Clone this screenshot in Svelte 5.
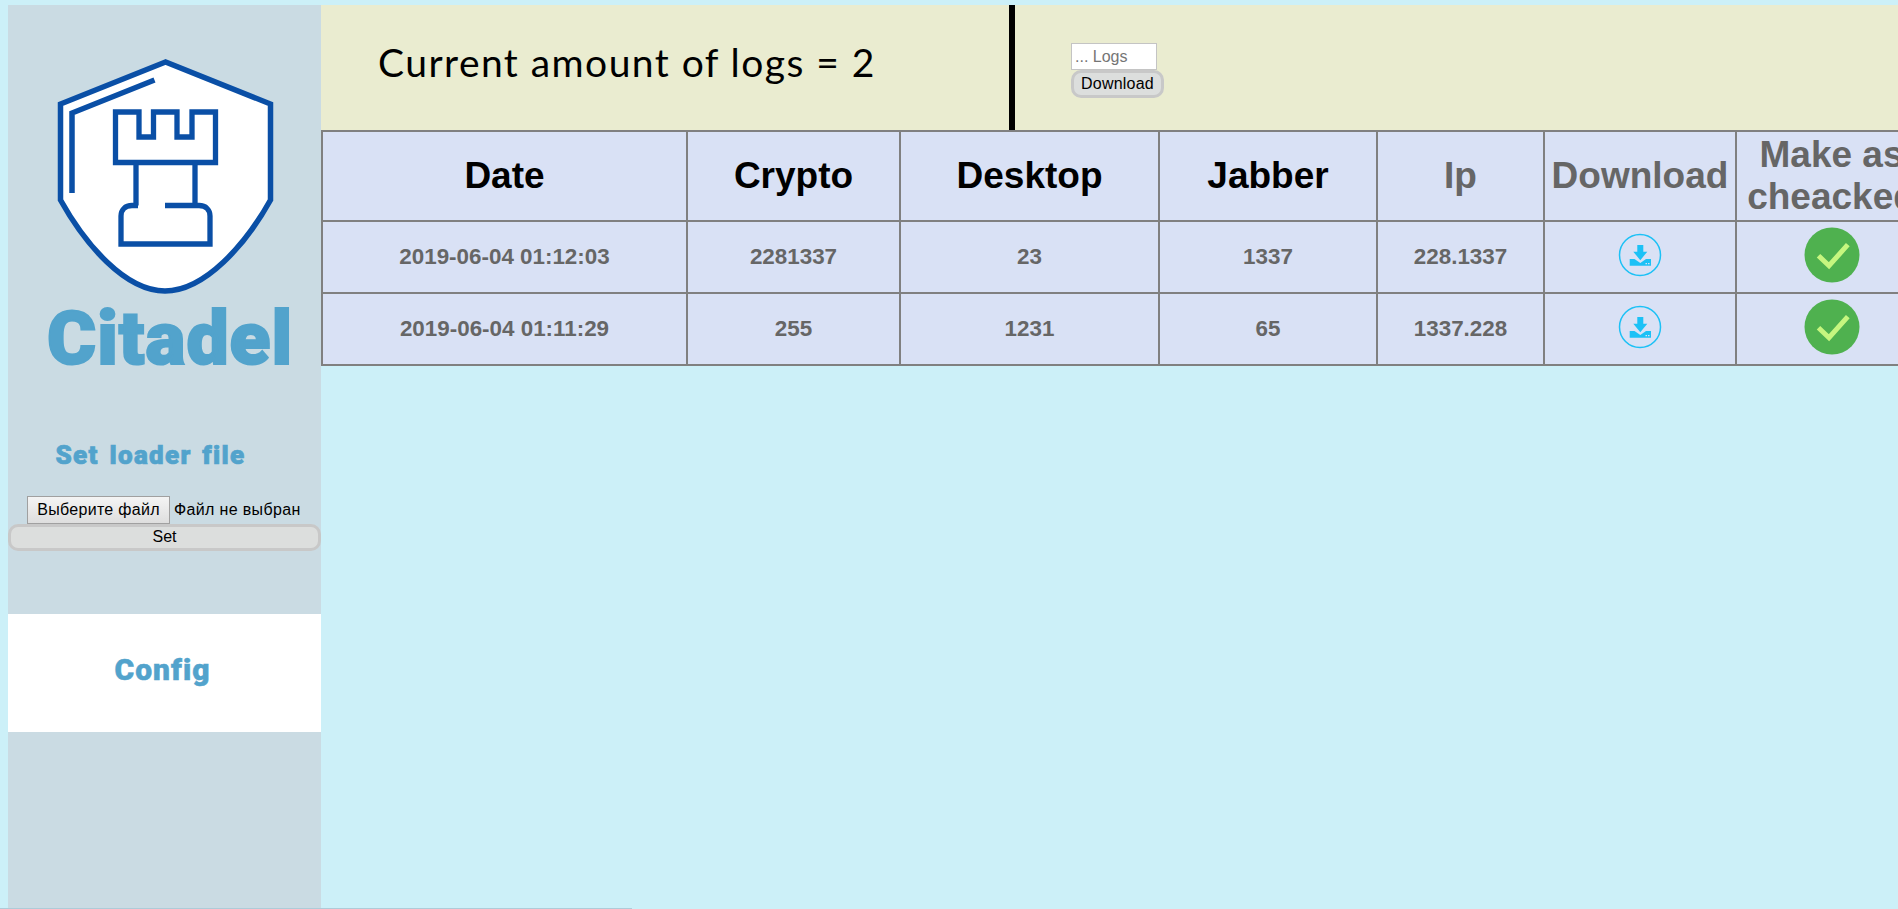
<script lang="ts">
	const logs = [
		{ date: '2019-06-04 01:12:03', crypto: '2281337', desktop: '23', jabber: '1337', ip: '228.1337' },
		{ date: '2019-06-04 01:11:29', crypto: '255', desktop: '1231', jabber: '65', ip: '1337.228' }
	];
</script>

<div class="page">
	<aside class="sidebar">
		<svg class="shield" width="313" height="245" viewBox="8 55 313 245" fill="none" stroke="#0a4fa6">
			<path d="M165.500 62 L60.500 104 V200 C85 244 125 291 165 291 C205 291 246 244 270.500 200 V104 Z" fill="#fff" stroke-width="5.500" />
			<path d="M154.500 80 L72 113 V193" stroke-width="5.500" />
			<path d="M115.500 112 H139 V137 H153.500 V112 H177 V137 H192 V112 H215.500 V162.500 H115.500 Z" stroke-width="5.300" />
			<path d="M136 162 V205.500 M195 162 V205.500" stroke-width="5.300" />
			<path d="M138 205.500 H132 C125 205.500 121 210 121 216 V244 H210 V216 C210 210 206 205.500 199 205.500 H165" stroke-width="5.300" />
		</svg>
		<div class="brand">Citadel</div>

		<h3 class="loader-title">Set loader file</h3>
		<div class="file-row">
			<button class="file-btn">Выберите файл</button>
			<span class="file-name">Файл не выбран</span>
		</div>
		<button class="pill wide">Set</button>

		<div class="config">Config</div>
	</aside>

	<main class="content">
		<header class="topbar">
			<div class="count">Current amount of logs = 2</div>
			<div class="download-form">
				<input class="logs-input" placeholder="... Logs" />
				<button class="pill">Download</button>
			</div>
		</header>

		<table>
			<colgroup>
				<col style="width: 365px" />
				<col style="width: 213px" />
				<col style="width: 259px" />
				<col style="width: 218px" />
				<col style="width: 167px" />
				<col style="width: 192px" />
				<col style="width: 191px" />
			</colgroup>
			<thead>
				<tr>
					<th>Date</th>
					<th>Crypto</th>
					<th>Desktop</th>
					<th>Jabber</th>
					<th class="muted">Ip</th>
					<th class="muted">Download</th>
					<th class="muted">Make as cheacked</th>
				</tr>
			</thead>
			<tbody>
				{#each logs as log}
					<tr>
						<td>{log.date}</td>
						<td>{log.crypto}</td>
						<td>{log.desktop}</td>
						<td>{log.jabber}</td>
						<td>{log.ip}</td>
						<td class="icon-cell">
							<svg class="icon" width="44" height="44" viewBox="0 0 44 44">
								<circle cx="22" cy="22" r="20.500" fill="none" stroke="#1cc1f6" stroke-width="1.500" />
								<path d="M19.300 12 H25.300 V18.700 H29.300 L22.300 27.200 L15.300 18.700 H19.300 Z" fill="#1cc1f6" />
								<path d="M11.700 26 H16.500 L22.300 30 L28 26 H33 V32.700 H11.700 Z" fill="#1cc1f6" />
								<path d="M27.500 30 H29 V31.200 H27.500 Z M30 30 H31.500 V31.200 H30 Z" fill="#d9e1f5" />
							</svg>
						</td>
						<td class="icon-cell">
							<svg class="icon" width="56" height="56" viewBox="0 0 56 56">
								<circle cx="28" cy="28" r="27.500" fill="#4fb14f" />
								<path d="M14.500 28.700 L25 38.700 L43.800 17.700" fill="none" stroke="#c6f67f" stroke-width="5" />
							</svg>
						</td>
					</tr>
				{/each}
			</tbody>
		</table>
	</main>

	<div class="scroll-thumb"></div>
</div>

<style>
	:global(body) {
		margin: 0;
		background: #ccf0f8;
	}

	.page {
		display: flex;
		height: 100vh;
		padding: 5px 0 0 8px;
		box-sizing: border-box;
		overflow: hidden;
		font-family: "Liberation Sans", Arial, sans-serif;
		font-size: 16px;
		color: #000;
	}

	.sidebar {
		flex: 0 0 313px;
		display: flex;
		flex-direction: column;
		align-items: center;
		background: #cadbe3;
	}

	.shield {
		display: block;
		margin-top: 50px;
		flex: none;
	}

	.brand,
	.loader-title,
	.config {
		font-family: Roboto, "Liberation Sans", sans-serif;
		font-weight: 900;
		color: #52a3cc;
		-webkit-text-stroke-color: #52a3cc;
	}

	.brand {
		margin-top: 2px;
		padding-left: 11px;
		font-size: 75px;
		line-height: 72px;
		letter-spacing: 1px;
		-webkit-text-stroke-width: 2px;
	}

	.loader-title {
		margin: 67px 0 0;
		padding-right: 28px;
		font-size: 26px;
		line-height: 28px;
		letter-spacing: 1.300px;
		word-spacing: 3px;
		-webkit-text-stroke-width: 0.700px;
	}

	.file-row {
		align-self: flex-start;
		display: flex;
		align-items: center;
		gap: 4px;
		margin: 27px 0 0 19px;
		letter-spacing: 0.350px;
	}

	.file-btn {
		height: 28px;
		width: 143px;
		padding: 0;
		background: linear-gradient(#f4f4f4, #dedede);
		border: 1px solid #a0a0a0;
		font: 16px "Liberation Sans", Arial, sans-serif;
		letter-spacing: 0.300px;
		color: #000;
	}

	.pill {
		height: 27px;
		padding: 0 7px 2px;
		background: #dcdedd;
		border: 3px solid #c8c8c8;
		border-radius: 10px;
		font: 16px "Liberation Sans", Arial, sans-serif;
		color: #000;
	}

	.wide {
		width: 100%;
		flex: none;
	}

	.config {
		align-self: stretch;
		box-sizing: border-box;
		height: 118px;
		margin-top: 63px;
		padding: 0 4px 8px 0;
		background: #fff;
		display: flex;
		align-items: center;
		justify-content: center;
		font-size: 30px;
		letter-spacing: 1px;
		-webkit-text-stroke-width: 0.500px;
	}

	.content {
		flex: 1;
		min-width: 0;
		overflow: hidden;
	}

	.topbar {
		display: flex;
		height: 125px;
		background: #eaecd0;
	}

	.count {
		flex: 0 0 631px;
		padding: 34px 0 0 57px;
		border-right: 6px solid #000;
		font-family: Lato, sans-serif;
		font-size: 39px;
		line-height: 46px;
		letter-spacing: 1.450px;
	}

	.download-form {
		display: flex;
		flex-direction: column;
		align-items: flex-start;
		padding: 38px 0 0 56px;
	}

	.logs-input {
		width: 86px;
		height: 27px;
		box-sizing: border-box;
		padding: 0 3px;
		border: 1px solid #c4c4c4;
		background: #fff;
		font: 16px "Liberation Sans", Arial, sans-serif;
	}

	.logs-input::placeholder {
		color: #757575;
		opacity: 1;
	}

	.download-form .pill {
		height: 28px;
		width: 93px;
		padding: 0;
		letter-spacing: 0.200px;
	}

	table {
		width: 1605px;
		table-layout: fixed;
		border-collapse: collapse;
		background: #d9e1f5;
	}

	th,
	td {
		padding: 0;
		border: 2px solid #808080;
		text-align: center;
		font-weight: bold;
	}

	thead tr {
		height: 90px;
	}

	tbody tr {
		height: 72px;
	}

	th {
		font-size: 37px;
		line-height: 42px;
	}

	td {
		font-size: 22.400px;
		color: #666;
	}

	.icon-cell {
		padding-bottom: 4px;
	}

	.muted {
		color: #666;
	}

	.icon {
		display: block;
		margin: 0 auto;
	}

	.scroll-thumb {
		position: absolute;
		left: 0;
		bottom: 0;
		width: 632px;
		height: 1px;
		background: #aecbd8;
	}
</style>
